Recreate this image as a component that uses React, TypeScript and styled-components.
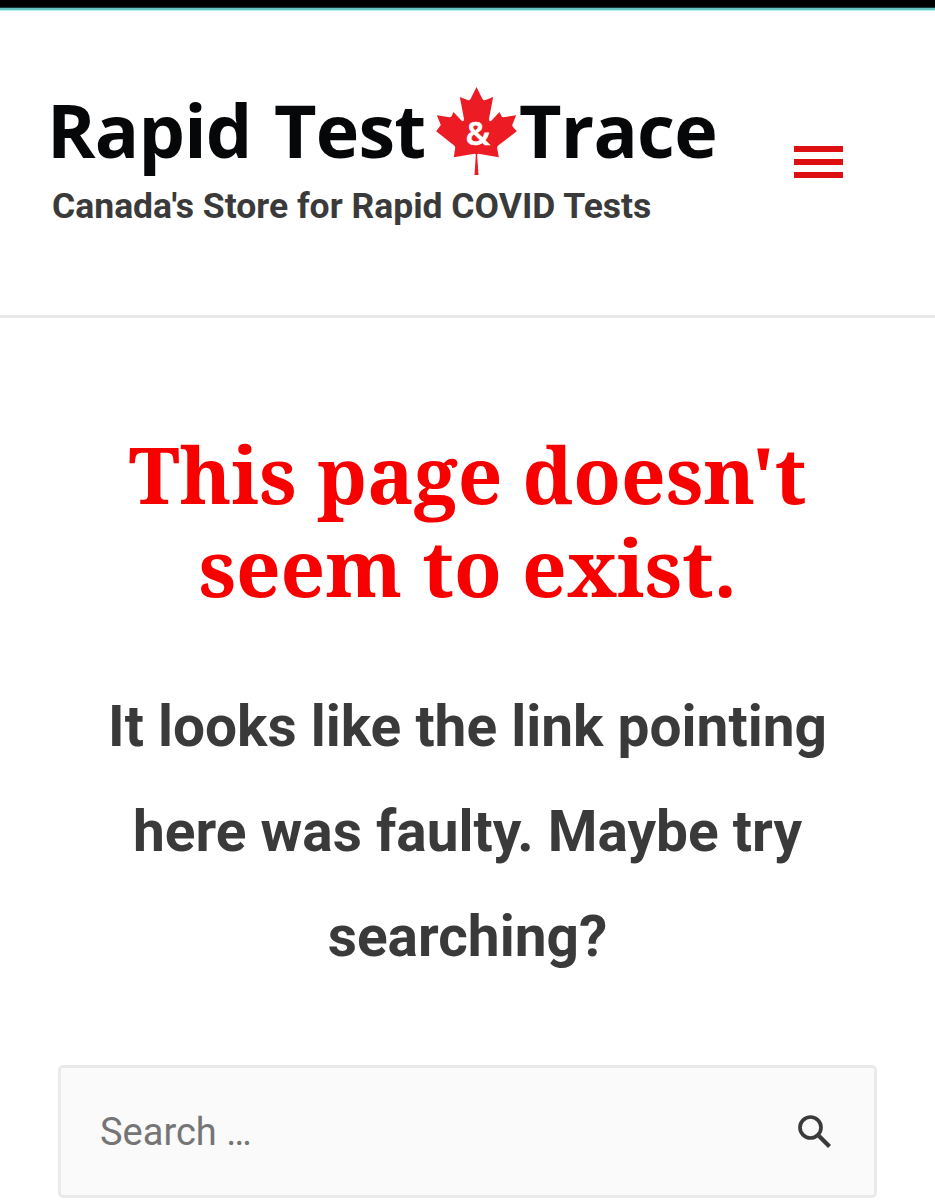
import React from 'react';
import styled, { createGlobalStyle } from 'styled-components';

const GlobalStyle = createGlobalStyle`
  *, *::before, *::after { box-sizing: border-box; }
  html, body { margin: 0; background: #fff; }
  body { height: 1200px; overflow: hidden; font-family: Roboto, sans-serif; color: #3a3a3a; }
`;

const StatusBar = styled.div`
  height: 11px;
  background: linear-gradient(#000 0 7px, #18393b 7px 8px, #67c3c2 8px 10px, #b5f0ee 10px 11px);
`;

const Header = styled.header`
  display: flex;
  align-items: flex-start;
  justify-content: space-between;
  height: 307px;
  padding: 76px 92px 0 47px;
  border-bottom: 3px solid #e9e9e9;
`;

const Brand = styled.div`
  display: flex;
  flex-direction: column;
`;

const Logo = styled.a`
  display: flex;
  height: 90px;
  color: #050709;
  text-decoration: none;
`;

const LogoWord = styled.span<{ $width: number }>`
  width: ${(p) => p.$width}px;
  font: 700 73.6px/85px 'Open Sans', 'Noto Sans', sans-serif;
  letter-spacing: -0.8px;
  word-spacing: 4px;
  white-space: nowrap;
`;

const Leaf = styled.svg`
  flex: none;
  width: 81px;
  height: 88px;
  margin-right: 2px;
`;

const Tagline = styled.p`
  margin: 8px 0 0 5px;
  font-size: 35.5px;
  font-weight: 700;
  line-height: 42px;
  white-space: nowrap;
`;

const MenuButton = styled.button`
  display: flex;
  flex-direction: column;
  gap: 7px;
  width: 49px;
  margin-top: 59px;
  padding: 0;
  border: 0;
  background: none;
`;

const MenuBar = styled.span`
  height: 6px;
  background: #dd0f10;
`;

const Main = styled.main`
  display: flex;
  flex-direction: column;
  align-items: center;
  padding: 110px 58px 0;
  text-align: center;
`;

const Title = styled.h1`
  width: 720px;
  margin: 0;
  color: #f80000;
  font-family: 'Noto Serif', 'DejaVu Serif Condensed', 'DejaVu Serif', serif;
  font-size: 78px;
  font-weight: 700;
  line-height: 93px;
`;

const Message = styled.p`
  width: 760px;
  margin: 60px 0 0;
  font-size: 56.8px;
  font-weight: 700;
  line-height: 105px;
`;

const SearchForm = styled.form`
  display: flex;
  align-items: center;
  justify-content: space-between;
  width: 819px;
  height: 133px;
  margin-top: 76px;
  padding: 0 42px 0 39px;
  border: 3px solid #eaeaea;
  border-radius: 5px;
  background: #fafafa;
`;

const SearchInput = styled.input`
  width: 500px;
  padding: 0;
  border: 0;
  outline: 0;
  background: none;
  font: 400 38px/50px Roboto, sans-serif;
  &::placeholder { color: #757575; opacity: 1; }
`;

const SearchButton = styled.button`
  display: flex;
  padding: 0;
  border: 0;
  background: none;
`;

export default function App() {
  return (
    <>
      <GlobalStyle />
      <StatusBar />
      <Header>
        <Brand>
          <Logo>
            <LogoWord $width={389}>Rapid Test</LogoWord>
            <Leaf viewBox="33 37 242 264">
              <path
                fill="#ed1c24"
                d="M154 37L136 73Q133 79 127 76L104 67L116 130Q118 145 108 137L85 112L79 125Q78 128 73 128L35 122L46 149Q48 153 43 156L33 170L85 211Q91 215 90 220L86 248L148 237Q152 237 152 241L148 301H160L156 241Q156 237 160 237L221 248L216 220Q215 215 221 211L275 170L263 156Q260 153 262 149L273 122L235 128Q230 128 229 125L223 112L200 137Q190 145 192 130L204 67L181 76Q175 79 172 73Z"
              />
              <text x="158" y="211" fill="#fff" stroke="#fff" strokeWidth="2" textAnchor="middle" fontFamily="Open Sans, Noto Sans, sans-serif" fontSize="98" fontWeight="600">&amp;</text>
            </Leaf>
            <LogoWord $width={200}>Trace</LogoWord>
          </Logo>
          <Tagline>Canada's Store for Rapid COVID Tests</Tagline>
        </Brand>
        <MenuButton aria-label="Menu">
          <MenuBar />
          <MenuBar />
          <MenuBar />
        </MenuButton>
      </Header>
      <Main>
        <Title>This page doesn't seem to exist.</Title>
        <Message>It looks like the link pointing here was faulty. Maybe try searching?</Message>
        <SearchForm>
          <SearchInput placeholder="Search …" />
          <SearchButton type="button" aria-label="Search">
            <svg width="34" height="34" viewBox="0 0 34 34" fill="none" stroke="#3a3a3a">
              <circle cx="12.5" cy="12.5" r="10.5" strokeWidth="3.7" />
              <path d="M21 21L31.5 31.5" strokeWidth="4.2" />
            </svg>
          </SearchButton>
        </SearchForm>
      </Main>
    </>
  );
}
